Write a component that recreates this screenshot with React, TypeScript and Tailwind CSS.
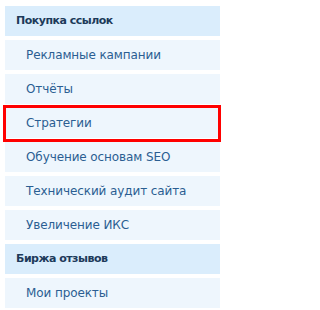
const sections = [
  {
    title: "Покупка ссылок",
    items: [
      "Рекламные кампании",
      "Отчёты",
      "Стратегии",
      "Обучение основам SEO",
      "Технический аудит сайта",
      "Увеличение ИКС",
    ],
  },
  {
    title: "Биржа отзывов",
    items: ["Мои проекты"],
  },
];

export default function App() {
  return (
    <div
      className="relative w-[228px] h-[310px] bg-white pt-[6px] px-[5px]"
      style={{ fontFamily: '"DejaVu Sans", sans-serif' }}
    >
      <div className="flex flex-col gap-[4px] w-[215px]">
        {sections.map((section) => (
          <div key={section.title} className="flex flex-col gap-[4px]">
            <div className="h-[30px] flex items-center pl-[11px] bg-[#daedfc] text-[11px] font-bold tracking-[-0.5px] text-[#1d3a5a]">
              {section.title}
            </div>
            {section.items.map((item) => (
              <div
                key={item}
                className="h-[30px] flex items-center pl-[21px] bg-[#eef6fd] text-[12px] tracking-[-0.1px] text-[#2b5e92]"
              >
                {item}
              </div>
            ))}
          </div>
        ))}
      </div>
      {/* highlight around "Стратегии" */}
      <div className="absolute left-[3px] top-[105px] w-[218px] h-[37px] border-[3px] border-[#ff0000]" />
    </div>
  );
}
